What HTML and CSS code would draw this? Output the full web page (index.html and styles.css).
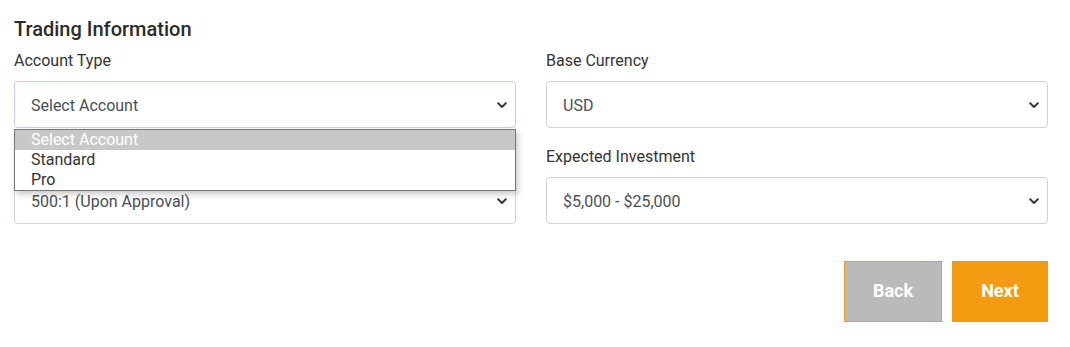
FILE: index.html
```html
<!DOCTYPE html>
<html lang="en">
<head>
<meta charset="utf-8">
<title>Trading Information</title>
<link rel="stylesheet" href="styles.css">
</head>
<body>
<div class="form">
  <h2 class="title">Trading Information</h2>
  <div class="grid">
    <div class="field field-open">
      <label class="label">Account Type</label>
      <div class="select select-focus">
        <span class="value">Select Account</span>
        <svg class="chev" width="10" height="7" viewBox="0 0 10 7"><path d="M1.2 1.3 L5 5 L8.8 1.3" fill="none" stroke="#343a40" stroke-width="2" stroke-linecap="round" stroke-linejoin="round"/></svg>
        <ul class="list">
          <li class="opt opt-active">Select Account</li>
          <li class="opt">Standard</li>
          <li class="opt">Pro</li>
        </ul>
      </div>
    </div>
    <div class="field">
      <label class="label">Base Currency</label>
      <div class="select">
        <span class="value">USD</span>
        <svg class="chev" width="10" height="7" viewBox="0 0 10 7"><path d="M1.2 1.3 L5 5 L8.8 1.3" fill="none" stroke="#343a40" stroke-width="2" stroke-linecap="round" stroke-linejoin="round"/></svg>
      </div>
    </div>
    <div class="field">
      <label class="label label-covered">Leverage</label>
      <div class="select">
        <span class="value">500:1 (Upon Approval)</span>
        <svg class="chev" width="10" height="7" viewBox="0 0 10 7"><path d="M1.2 1.3 L5 5 L8.8 1.3" fill="none" stroke="#343a40" stroke-width="2" stroke-linecap="round" stroke-linejoin="round"/></svg>
      </div>
    </div>
    <div class="field">
      <label class="label">Expected Investment</label>
      <div class="select">
        <span class="value">$5,000 - $25,000</span>
        <svg class="chev" width="10" height="7" viewBox="0 0 10 7"><path d="M1.2 1.3 L5 5 L8.8 1.3" fill="none" stroke="#343a40" stroke-width="2" stroke-linecap="round" stroke-linejoin="round"/></svg>
      </div>
    </div>
  </div>
  <div class="actions">
    <button class="btn btn-back">Back</button>
    <button class="btn btn-next">Next</button>
  </div>
</div>
</body>
</html>
```
FILE: styles.css
```css
* { box-sizing: border-box; }
html, body { margin: 0; padding: 0; background: #fff; }
body {
  font-family: Roboto, "Liberation Sans", Arial, sans-serif;
  color: #333;
}
.form {
  padding: 17px 22px 0 14px;
}
.title {
  margin: 0 0 8px;
  font-size: 20px;
  line-height: 24px;
  font-weight: 500;
  color: #2b2b2b;
}
.grid {
  display: grid;
  grid-template-columns: 1fr 1fr;
  column-gap: 30px;
  row-gap: 17px;
}
.field { display: flex; flex-direction: column; }
.field-open { position: relative; z-index: 5; }
.label {
  font-size: 16px;
  line-height: 24px;
  margin-bottom: 8px;
  color: #333;
}
.label-covered { visibility: hidden; }
.select {
  position: relative;
  height: 47px;
  border: 1px solid #ced4da;
  border-radius: 4px;
  background: #fff;
  display: flex;
  align-items: center;
  justify-content: space-between;
  padding: 2px 8px 0 16px;
  font-size: 16px;
  line-height: 24px;
  color: #495057;
}
.select-focus { border-color: #b9d6f6; }
.chev { display: block; }
.list {
  position: absolute;
  top: 47px;
  left: -1px;
  right: -1px;
  margin: 0;
  padding: 0;
  list-style: none;
  background: #fff;
  border: 1px solid #767676;
  box-shadow: 2px 3px 6px rgba(0, 0, 0, 0.22);
}
.opt {
  height: 20px;
  line-height: 20px;
  padding-left: 16px;
  font-size: 16px;
  color: #333;
}
.opt-active { background: #c8c8c8; color: #fff; }
.actions {
  display: flex;
  justify-content: flex-end;
  gap: 10px;
  margin-top: 37px;
}
.btn {
  height: 61px;
  border: 1px solid #f39c12;
  font-family: Roboto, "Liberation Sans", Arial, sans-serif;
  font-size: 18px;
  font-weight: 700;
  color: #fff;
  padding: 0 0 2px;
  cursor: pointer;
}
.btn-back { width: 98px; background: #bababa; }
.btn-next { width: 96px; background: #f39c12; }
```
